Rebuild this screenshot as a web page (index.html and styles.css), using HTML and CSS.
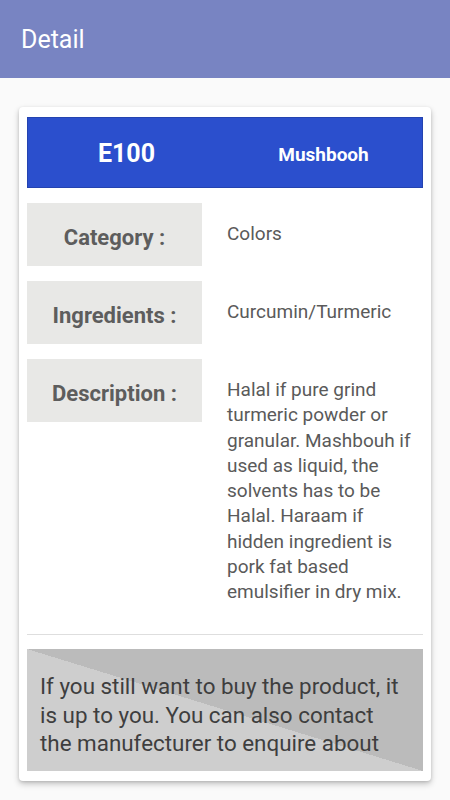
FILE: index.html
```html
<!DOCTYPE html>
<html lang="en">
<head>
<meta charset="utf-8">
<title>Detail</title>
<link rel="stylesheet" href="styles.css">
</head>
<body>
<header class="appbar">
  <h1 class="appbar-title">Detail</h1>
</header>
<main class="content">
  <section class="card">
    <div class="head">
      <div class="head-code">E100</div>
      <div class="head-status">Mushbooh</div>
    </div>
    <div class="row">
      <div class="label">Category :</div>
      <div class="value">Colors</div>
    </div>
    <div class="row">
      <div class="label">Ingredients :</div>
      <div class="value">Curcumin/Turmeric</div>
    </div>
    <div class="row">
      <div class="label">Description :</div>
      <div class="value">Halal if pure grind turmeric powder or granular. Mashbouh if used as liquid, the solvents has to be Halal. Haraam if hidden ingredient is pork fat based emulsifier in dry mix.</div>
    </div>
    <hr class="divider">
    <div class="note">
      <p class="note-text">If you still want to buy the product, it is up to you. You can also contact the manufecturer to enquire about</p>
    </div>
  </section>
</main>
</body>
</html>
```

FILE: styles.css
```css
* {
  box-sizing: border-box;
}

html, body {
  margin: 0;
  padding: 0;
}

body {
  width: 450px;
  height: 800px;
  overflow: hidden;
  background: #fafafa;
  font-family: Roboto, "Liberation Sans", sans-serif;
}

.appbar {
  height: 78px;
  background: #7884c2;
  display: flex;
  align-items: center;
  padding-left: 21px;
}

.appbar-title {
  margin: 0;
  color: #ffffff;
  font-size: 25px;
  font-weight: 400;
  line-height: 30px;
  padding-top: 2px;
}

.content {
  padding: 29px 19px 0 19px;
}

.card {
  background: #ffffff;
  border-radius: 4px;
  box-shadow: 0 3px 6px rgba(0, 0, 0, 0.22), 0 1px 3px rgba(0, 0, 0, 0.12);
  padding: 10px 8px 10px 8px;
}

.head {
  height: 71px;
  background: #2b4fcd;
  border: 1px solid #2443b0;
  display: grid;
  grid-template-columns: 1fr 1fr;
  align-items: center;
  color: #ffffff;
  font-weight: 700;
  text-align: center;
}

.head-code {
  font-size: 25px;
  padding-top: 1px;
}

.head-status {
  font-size: 19px;
  padding-top: 4px;
}

.row {
  display: flex;
  align-items: flex-start;
  margin-top: 15px;
}

.label {
  flex: 0 0 175px;
  height: 63px;
  background: #e8e8e6;
  color: #5d5d5d;
  font-size: 22px;
  font-weight: 700;
  display: flex;
  align-items: center;
  justify-content: center;
  padding-top: 6px;
}

.row:first-of-type .label {
  height: 64px;
}

.value {
  flex: 1;
  padding: 18px 8px 0 25px;
  color: #5a5a5a;
  font-size: 19px;
  line-height: 25.25px;
}

.divider {
  border: 0;
  height: 1px;
  background: #dedede;
  margin: 30px 0 14px 0;
}

.note {
  height: 122px;
  overflow: hidden;
  background: linear-gradient(to top right, #cecece 50%, #bbbbbb 50%);
  padding: 23px 20px 0 13px;
}

.note-text {
  margin: 0;
  color: #3e3e3e;
  font-size: 22.4px;
  line-height: 28.5px;
}
```
